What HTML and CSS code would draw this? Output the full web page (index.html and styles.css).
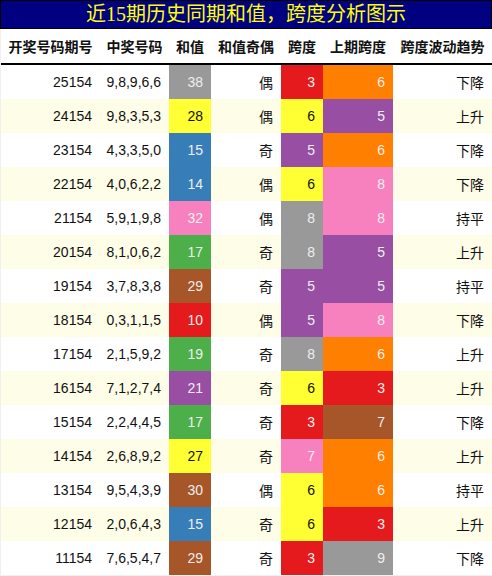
FILE: index.html
```html
<!DOCTYPE html>
<html lang="zh">
<head>
    <meta charset="UTF-8">
    <meta name="viewport" content="width=device-width, initial-scale=1.0">
    <title>近15期历史同期和值，跨度分析图示</title>
    <link rel="stylesheet" href="styles.css">
</head>
<body>
    <div class="title">近15期历史同期和值，跨度分析图示</div>
    <div class="wrap">
        <table class="stats">
            <colgroup>
                <col class="c-issue">
                <col class="c-nums">
                <col class="c-sum">
                <col class="c-parity">
                <col class="c-span">
                <col class="c-prev">
                <col class="c-trend">
            </colgroup>
            <thead>
                <tr>
                    <th>开奖号码期号</th>
                    <th>中奖号码</th>
                    <th>和值</th>
                    <th>和值奇偶</th>
                    <th>跨度</th>
                    <th>上期跨度</th>
                    <th>跨度波动趋势</th>
                </tr>
            </thead>
            <tbody>
                <tr><td>25154</td><td>9,8,9,6,6</td><td class="gray">38</td><td>偶</td><td class="red">3</td><td class="orange">6</td><td>下降</td></tr>
                <tr><td>24154</td><td>9,8,3,5,3</td><td class="yellow">28</td><td>偶</td><td class="yellow">6</td><td class="purple">5</td><td>上升</td></tr>
                <tr><td>23154</td><td>4,3,3,5,0</td><td class="blue">15</td><td>奇</td><td class="purple">5</td><td class="orange">6</td><td>下降</td></tr>
                <tr><td>22154</td><td>4,0,6,2,2</td><td class="blue">14</td><td>偶</td><td class="yellow">6</td><td class="pink">8</td><td>下降</td></tr>
                <tr><td>21154</td><td>5,9,1,9,8</td><td class="pink">32</td><td>偶</td><td class="gray">8</td><td class="pink">8</td><td>持平</td></tr>
                <tr><td>20154</td><td>8,1,0,6,2</td><td class="green">17</td><td>奇</td><td class="gray">8</td><td class="purple">5</td><td>上升</td></tr>
                <tr><td>19154</td><td>3,7,8,3,8</td><td class="brown">29</td><td>奇</td><td class="purple">5</td><td class="purple">5</td><td>持平</td></tr>
                <tr><td>18154</td><td>0,3,1,1,5</td><td class="red">10</td><td>偶</td><td class="purple">5</td><td class="pink">8</td><td>下降</td></tr>
                <tr><td>17154</td><td>2,1,5,9,2</td><td class="green">19</td><td>奇</td><td class="gray">8</td><td class="orange">6</td><td>上升</td></tr>
                <tr><td>16154</td><td>7,1,2,7,4</td><td class="purple">21</td><td>奇</td><td class="yellow">6</td><td class="red">3</td><td>上升</td></tr>
                <tr><td>15154</td><td>2,2,4,4,5</td><td class="green">17</td><td>奇</td><td class="red">3</td><td class="brown">7</td><td>下降</td></tr>
                <tr><td>14154</td><td>2,6,8,9,2</td><td class="yellow">27</td><td>奇</td><td class="pink">7</td><td class="orange">6</td><td>上升</td></tr>
                <tr><td>13154</td><td>9,5,4,3,9</td><td class="brown">30</td><td>偶</td><td class="yellow">6</td><td class="orange">6</td><td>持平</td></tr>
                <tr><td>12154</td><td>2,0,6,4,3</td><td class="blue">15</td><td>奇</td><td class="yellow">6</td><td class="red">3</td><td>上升</td></tr>
                <tr><td>11154</td><td>7,6,5,4,7</td><td class="brown">29</td><td>奇</td><td class="red">3</td><td class="gray">9</td><td>下降</td></tr>
            </tbody>
        </table>
    </div>
</body>
</html>
```

FILE: styles.css
```css
body {
    margin: 0;
    padding: 0;
    background: #f0f0f0;
    font-family: 'Liberation Sans', 'Noto Sans CJK SC', sans-serif;
    color: #111;
}

.title {
    height: 27px;
    line-height: 27px;
    background: #000080;
    border: 1px solid #000;
    color: #ffff00;
    font-family: 'Liberation Serif', 'Noto Sans CJK SC', serif;
    font-size: 20px;
    text-align: center;
}

.wrap {
    padding-left: 1px;
}

.stats {
    width: 491px;
    border-collapse: collapse;
    table-layout: fixed;
    font-size: 14px;
}

.c-issue { width: 99px; }
.c-nums { width: 69px; }
.c-sum { width: 42px; }
.c-parity { width: 70px; }
.c-span { width: 42px; }
.c-prev { width: 70px; }
.c-trend { width: 99px; }

.stats th {
    height: 34px;
    padding: 0;
    background: white;
    border-bottom: 2px solid #000;
    font-family: 'Noto Sans CJK SC', sans-serif;
    font-weight: bold;
    text-align: center;
    white-space: nowrap;
}

.stats td {
    height: 34px;
    padding: 0 8px 0 0;
    text-align: right;
    white-space: nowrap;
}

.stats tbody tr:nth-child(odd) {
    background: white;
}

.stats tbody tr:nth-child(even) {
    background: #fefde8;
}

.stats td.gray { background: #999999; color: #eee; }
.stats td.yellow { background: #ffff33; color: #111; }
.stats td.blue { background: #377eb8; color: #eee; }
.stats td.orange { background: #ff7f00; color: #eee; }
.stats td.purple { background: #984ea3; color: #eee; }
.stats td.pink { background: #f781bf; color: #eee; }
.stats td.green { background: #4daf4a; color: #eee; }
.stats td.red { background: #e41a1c; color: #eee; }
.stats td.brown { background: #a65628; color: #eee; }
```
